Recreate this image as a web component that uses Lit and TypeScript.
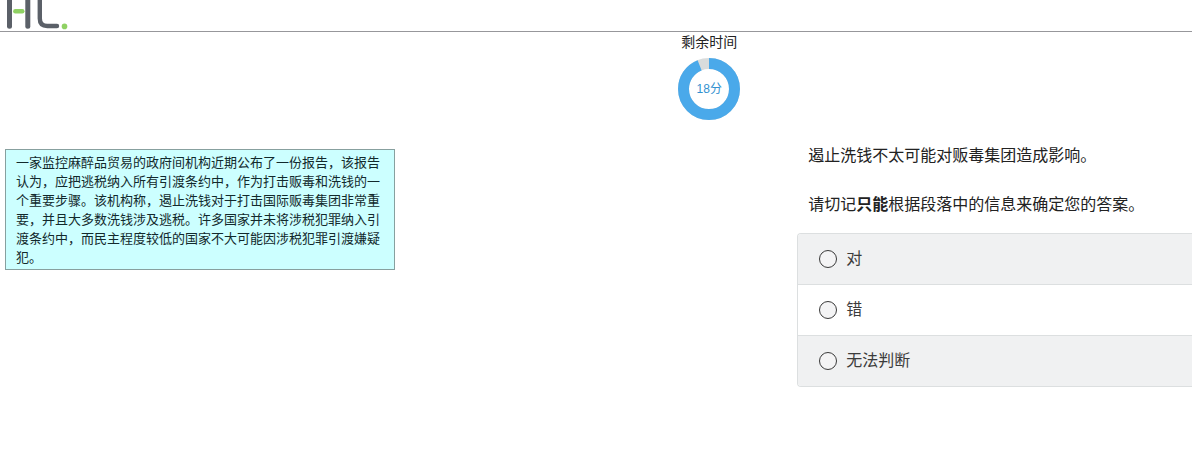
import { LitElement, html, css, svg } from "lit";
import { customElement, property, state } from "lit/decorators.js";

@customElement("brand-logo")
class BrandLogo extends LitElement {
  static styles = css`
    :host { display: block; }
    .mark { display: block; }
  `;

  render() {
    return html`
      <svg class="mark" width="76" height="31" viewBox="0 0 76 31" role="img" aria-label="Logo">
        <g fill="none" stroke-linecap="round" stroke-width="5" stroke="#5b6068">
          <path d="M9.5 -8V26.2" />
          <path d="M27.8 -8V26.2" />
          <path d="M39.8 -8V18.5Q39.8 26 47.3 26H57" stroke-width="4.4" />
          <path d="M15.3 11.2H22.3" stroke="#8fd163" stroke-width="4.4" />
        </g>
        <circle cx="64.5" cy="26.4" r="2.8" fill="#8fd163" />
      </svg>
    `;
  }
}

@customElement("time-ring")
class TimeRing extends LitElement {
  @property({ type: Number }) minutes = 18;
  @property({ type: Number }) remaining = 0.934;

  static styles = css`
    :host { display: flex; flex-direction: column; align-items: center; }
    .label { font-size: 14px; line-height: 20px; color: #222; }
    .ring { display: grid; place-items: center; margin-top: 6px; }
    .dial, .value { grid-area: 1 / 1; }
    .dial { display: block; transform: rotate(-90deg); }
    .value { font-size: 12px; line-height: 16px; color: #3391cf; }
  `;

  render() {
    const radius = 25.5;
    const length = 2 * Math.PI * radius;
    const arc = svg`<circle cx="31" cy="31" r=${radius} fill="none" stroke="#4aa9ea" stroke-width="11"
      stroke-dasharray="${length * this.remaining} ${length}" />`;
    return html`
      <div class="label">剩余时间</div>
      <div class="ring">
        <svg class="dial" width="62" height="62" viewBox="0 0 62 62" aria-hidden="true">
          <circle cx="31" cy="31" r=${radius} fill="none" stroke="#d9dcdc" stroke-width="11" />
          ${arc}
        </svg>
        <span class="value">${this.minutes}分</span>
      </div>
    `;
  }
}

@customElement("app-root")
class AppRoot extends LitElement {
  @state() private answer = "";

  private options = ["对", "错", "无法判断"];

  static styles = css`
    :host {
      display: block;
      min-height: 100vh;
      overflow: hidden;
      background: #fff;
      color: #222;
      font-family: "Liberation Sans", "Noto Sans CJK SC", sans-serif;
    }
    .header { border-bottom: 1px solid #97979b; }
    .timer { padding-left: 19%; }
    .content {
      display: grid;
      grid-template-columns: 2fr 1fr;
      column-gap: 3px;
      align-items: start;
      padding: 23px 0 0 5px;
    }
    .passage {
      box-sizing: border-box;
      width: 390px;
      max-width: 100%;
      margin: 6px 0 0;
      padding: 3px 10px 2px;
      border: 1px solid #87a09f;
      background: #cff;
      color: #12292c;
      font-size: 13px;
      line-height: 19px;
    }
    .text {
      margin: 0 0 24px;
      padding-left: 11px;
      font-size: 16px;
      line-height: 25px;
    }
    .question { min-width: 0; }
    .prompt { margin-bottom: 16px; }
    .choices {
      margin: 0;
      padding: 0;
      border: 1px solid #dcdfe0;
      border-right: 0;
      border-radius: 4px 0 0 4px;
      overflow: hidden;
    }
    .choice {
      display: flex;
      align-items: center;
      gap: 9px;
      padding: 12px 21px;
      font-size: 16px;
      line-height: 26px;
      color: #3c3c3c;
      cursor: pointer;
    }
    .choice:nth-child(odd) { background: #f0f1f2; }
    .choice + .choice { border-top: 1px solid #dcdfe0; }
    .radio {
      appearance: none;
      box-sizing: border-box;
      flex: none;
      width: 18px;
      height: 18px;
      margin: 0;
      border: 1px solid #3a3a3a;
      border-radius: 50%;
      background: #f4f4f5;
    }
    .radio:checked { background: radial-gradient(#3391cf 45%, #fff 50%); }
  `;

  render() {
    return html`
      <header class="header"><brand-logo></brand-logo></header>
      <div class="timer"><time-ring .minutes=${18}></time-ring></div>
      <main class="content">
        <p class="passage">一家监控麻醉品贸易的政府间机构近期公布了一份报告，该报告认为，应把逃税纳入所有引渡条约中，作为打击贩毒和洗钱的一个重要步骤。该机构称，遏止洗钱对于打击国际贩毒集团非常重要，并且大多数洗钱涉及逃税。许多国家并未将涉税犯罪纳入引渡条约中，而民主程度较低的国家不大可能因涉税犯罪引渡嫌疑犯。</p>
        <section class="question">
          <p class="text" id="statement">遏止洗钱不太可能对贩毒集团造成影响。</p>
          <p class="text prompt">请切记<b>只能</b>根据段落中的信息来确定您的答案。</p>
          <div class="choices" role="radiogroup" aria-labelledby="statement">
            ${this.options.map(
              (option) => html`
                <label class="choice">
                  <input
                    class="radio"
                    type="radio"
                    name="answer"
                    .value=${option}
                    .checked=${this.answer === option}
                    @change=${() => (this.answer = option)}
                  />
                  <span>${option}</span>
                </label>
              `
            )}
          </div>
        </section>
      </main>
    `;
  }
}
